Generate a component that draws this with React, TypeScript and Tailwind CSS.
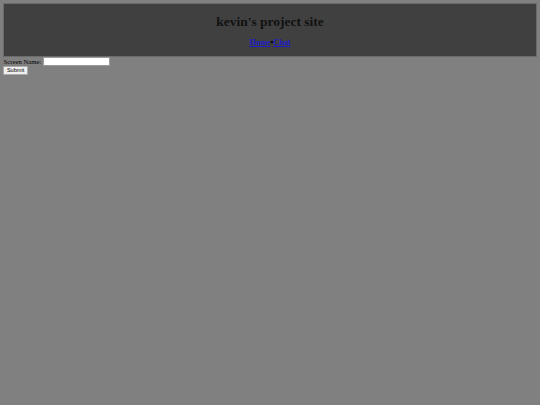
export default function App() {
  return (
    <div className="min-h-screen bg-[#808080] p-[3.4px] font-['Liberation_Serif',serif] text-black">
      <div className="border border-[#6b6b6b] bg-[#404040] text-center">
        <h1 className="mt-[9.5px] mb-[9px] text-[13.5px] font-bold leading-[15.5px] text-[#111]">kevin's project site</h1>
        <h3 className="mt-0 mb-[8.5px] text-[8.2px] font-bold leading-[9.5px]">
          <a href="#" className="text-[#1c1cc8] underline">Home</a>
          <span className="text-black">•</span>
          <a href="#" className="text-[#1c1cc8] underline">Chat</a>
        </h3>
      </div>
      <form className="text-[6.75px] leading-[7.8px]">
        <div className="flex items-center gap-[1.5px]">
          <span>Screen Name:</span>
          <input
            type="text"
            className="h-[9px] w-[67px] border border-[#999] bg-white px-[1px] text-[5.6px]"
          />
        </div>
        <button
          type="button"
          className="h-[9px] rounded-[1px] border border-[#aaa] bg-[#efefef] px-[2.5px] font-['Liberation_Sans',sans-serif] text-[5.6px] leading-[7px] text-black"
        >
          Submit
        </button>
      </form>
    </div>
  );
}
